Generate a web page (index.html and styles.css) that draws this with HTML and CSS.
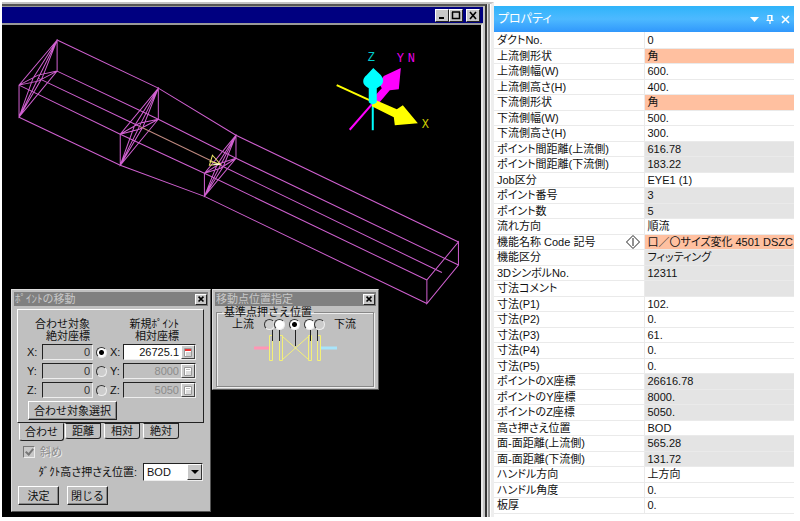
FILE: index.html
```
<!DOCTYPE html>
<html lang="ja">
<head>
<meta charset="utf-8">
<title>プロパティ</title>
<link rel="stylesheet" href="styles.css">
</head>
<body>
<main class="workspace">
  <section class="cad">
    <div class="cad-window">
      <header class="cad-title">
        <button class="win-btn" type="button" aria-label="最小化"><svg viewBox="0 0 12 11"><path d="M3 8h5" stroke="#000" stroke-width="2"/></svg></button>
        <button class="win-btn" type="button" aria-label="最大化"><svg viewBox="0 0 12 11"><path d="M2.500 2v6.500h7V2M2 2h8" fill="none" stroke="#000" stroke-width="1.500"/></svg></button>
        <button class="win-btn win-btn-close" type="button" aria-label="閉じる"><svg viewBox="0 0 12 11"><path d="M3 2l6 7M9 2L3 9" stroke="#000" stroke-width="1.600"/></svg></button>
      </header>
      <div class="viewport">
        <svg class="scene" viewBox="2 25 478 491" preserveAspectRatio="xMinYMin meet">
          <g class="duct">
            <path d="M57 40L158 88L235.500 135L457.500 241.500M57 71L158 119L235.500 158L457.500 264.500M19 85L120 134L204 173L426 279.500M19 117L120 165L204 196L426 303"/>
            <path d="M57 40V71L19 117V85ZM57 40L19 117M57 40L42 78L19 117L33 78ZM19 85L38 75L57 71L38 81Z"/>
            <path d="M158 88V119L120 165V134ZM158 88L120 165M158 88L143 126L120 165L134 126ZM120 134L139 123L158 119L139 129Z"/>
            <path d="M235.500 135V158L204 196V173ZM235.500 135L204 196M235.500 135L223 166L204 196L216 166ZM204 173L220 163L235.500 158L220 168Z"/>
            <path d="M457.500 241.500V264.500L426 303V279.500Z"/>
            <path d="M38 78L139 126M220 165L441 272"/>
          </g>
          <path d="M139 126L220 165" stroke="#c08a80"/>
          <path d="M212 155L220 164L209 165ZM209 161L220 164" fill="none" stroke="#f0e868"/>
          <path d="M213 164H219" stroke="#fff"/>
          <g fill="none" stroke-width="2">
            <path d="M349 129.500L373 102" stroke="#f0f"/>
            <path d="M372 102V130" stroke="#0ff"/>
            <path d="M336 85L373 102" stroke="#ff0"/>
          </g>
          <path d="M371 99L381 88L378 83L383 76L400 68L398 89L389 90L378 103Z" fill="#f0f"/>
          <path d="M373 99L396 109L402 105L417 123L394 125L393 117L371 106Z" fill="#ff0"/>
          <path d="M372.500 68L380 75C384 80 383 85 376 88V102Q372 106 368 102V88C361 85 361 79 366 75Z" fill="#0ff"/>
          <g class="axis-names">
            <text x="367" y="61" fill="#0cc">Z</text>
            <text x="396" y="62" fill="#e0e">Y</text>
            <text x="407" y="62" fill="#e0e">N</text>
            <text x="421" y="128" fill="#cc0">X</text>
          </g>
        </svg>

        <form class="dialog dialog-move">
          <header class="dialog-title"><h2>ﾎﾟｲﾝﾄの移動</h2><button class="win-btn" type="button" aria-label="閉じる"><svg viewBox="0 0 12 11"><path d="M3 2l6 6M9 2L3 8" stroke="#000" stroke-width="2"/></svg></button></header>
          <div class="tab-page">
            <div class="coord-heads"><span>合わせ対象<br>絶対座標</span><span>新規ﾎﾟｲﾝﾄ<br>相対座標</span></div>
            <div class="coords">
              <label for="ax">X:</label><input id="ax" class="field off dark" value="0" readonly><input type="radio" name="axis" aria-label="X" checked><label for="nx">X:</label><span class="field"><input id="nx" value="26725.1"><button class="calc" type="button" aria-label="X 電卓"><svg viewBox="0 0 12 12"><path d="M2.500 2.500h7v8h-7z" fill="#fff" stroke="#999"/><path d="M3 4h6" stroke="#e33" stroke-width="2"/><path d="M4 7h5M4 9h5" stroke="#aaa"/></svg></button></span>
              <label for="ay">Y:</label><input id="ay" class="field off dark" value="0" readonly><input type="radio" name="axis" aria-label="Y"><label for="ny">Y:</label><span class="field off"><input id="ny" value="8000" disabled><button class="calc" type="button" aria-label="Y 電卓" disabled><svg viewBox="0 0 12 12"><path d="M2.500 2.500h7v8h-7z" fill="#fff" stroke="#999"/><path d="M4 4.500h4M4 7h5M4 9h5" stroke="#bbb"/></svg></button></span>
              <label for="az">Z:</label><input id="az" class="field off dark" value="0" readonly><input type="radio" name="axis" aria-label="Z"><label for="nz">Z:</label><span class="field off"><input id="nz" value="5050" disabled><button class="calc" type="button" aria-label="Z 電卓" disabled><svg viewBox="0 0 12 12"><path d="M2.500 2.500h7v8h-7z" fill="#fff" stroke="#999"/><path d="M4 4.500h4M4 7h5M4 9h5" stroke="#bbb"/></svg></button></span>
            </div>
            <button class="push" type="button">合わせ対象選択</button>
          </div>
          <nav class="tabs"><button class="tab current" type="button">合わせ</button><button class="tab" type="button">距離</button><button class="tab" type="button">相対</button><button class="tab" type="button">絶対</button></nav>
          <label class="check-row"><input type="checkbox" checked disabled>斜め</label>
          <div class="combo-row"><label for="hold">ﾀﾞｸﾄ高さ押さえ位置:</label><span class="combo"><select id="hold"><option>BOD</option></select><i class="combo-arrow"></i></span></div>
          <div class="actions"><button class="push" type="button">決定</button><button class="push" type="button">閉じる</button></div>
        </form>

        <form class="dialog dialog-point">
          <header class="dialog-title"><h2>移動点位置指定</h2><button class="win-btn" type="button" aria-label="閉じる"><svg viewBox="0 0 12 11"><path d="M3 2l6 6M9 2L3 8" stroke="#000" stroke-width="2"/></svg></button></header>
          <fieldset>
            <legend>基準点押さえ位置</legend>
            <div class="flow-row">
              <span>上流</span>
              <span class="stops"><input type="radio" name="stop" aria-label="位置1"><input class="filled" type="radio" name="stop" aria-label="位置2"><input class="middle" type="radio" name="stop" aria-label="位置3" checked><input class="filled" type="radio" name="stop" aria-label="位置4"><input type="radio" name="stop" aria-label="位置5"></span>
              <span>下流</span>
            </div>
            <svg class="flow-pic" viewBox="0 0 84 32">
              <path d="M0 18H16" stroke="#ff96b4" stroke-width="3"/>
              <path d="M67 18H83" stroke="#a8e4fa" stroke-width="3"/>
              <path d="M15.500 5.500h3v25h-3zM25.500 5.500h3v25h-3zM54.500 5.500h3v25h-3zM63.500 5.500h3v25h-3zM28 6L55 30M55 6L28 30" fill="none" stroke="#f4f078"/>
              <path d="M18.500 0V11M25.500 0V11M41.500 0V16M56.500 0V11M63.500 0V11" stroke="#222"/>
            </svg>
          </fieldset>
        </form>
      </div>
    </div>
  </section>

  <aside class="properties">
    <header class="prop-title">
      <h1>プロパティ</h1>
      <button type="button" aria-label="メニュー"><svg viewBox="0 0 10 10"><path d="M0 3H9L4.500 8Z" fill="#fff"/></svg></button>
      <button type="button" aria-label="固定"><svg viewBox="0 0 10 10"><path d="M3 6V1.500H7V6M6.500 1.500V6M1.500 6.500H8.500M5 6.500V10" fill="none" stroke="#fff" stroke-width="1.200"/></svg></button>
      <button type="button" aria-label="閉じる"><svg viewBox="0 0 10 10"><path d="M2 2L9 9M9 2L2 9" stroke="#fff" stroke-width="1.600"/></svg></button>
    </header>
    <table>
      <tbody>
        <tr><th>ダクトNo.</th><td>0</td></tr>
        <tr><th>上流側形状</th><td class="shape">角</td></tr>
        <tr><th>上流側幅(W)</th><td>600.</td></tr>
        <tr><th>上流側高さ(H)</th><td>400.</td></tr>
        <tr><th>下流側形状</th><td class="shape">角</td></tr>
        <tr><th>下流側幅(W)</th><td>500.</td></tr>
        <tr><th>下流側高さ(H)</th><td>300.</td></tr>
        <tr><th>ポイント間距離(上流側)</th><td class="fixed">616.78</td></tr>
        <tr><th>ポイント間距離(下流側)</th><td class="fixed">183.22</td></tr>
        <tr><th>Job区分</th><td>EYE1 (1)</td></tr>
        <tr><th>ポイント番号</th><td class="fixed">3</td></tr>
        <tr><th>ポイント数</th><td class="fixed">5</td></tr>
        <tr><th>流れ方向</th><td>順流</td></tr>
        <tr><th>機能名称 Code 記号<svg class="mark" viewBox="0 0 16 14"><path d="M8 .5L14.500 7L8 13.500L1.500 7ZM8 3V11" fill="#fff" stroke="#222"/></svg></th><td class="shape">口／〇サイズ変化 4501 DSZC</td></tr>
        <tr><th>機能区分</th><td class="fixed">フィッティング</td></tr>
        <tr><th>3DシンボルNo.</th><td class="fixed">12311</td></tr>
        <tr><th>寸法コメント</th><td class="fixed"></td></tr>
        <tr><th>寸法(P1)</th><td>102.</td></tr>
        <tr><th>寸法(P2)</th><td>0.</td></tr>
        <tr><th>寸法(P3)</th><td>61.</td></tr>
        <tr><th>寸法(P4)</th><td>0.</td></tr>
        <tr><th>寸法(P5)</th><td>0.</td></tr>
        <tr><th>ポイントのX座標</th><td class="fixed">26616.78</td></tr>
        <tr><th>ポイントのY座標</th><td class="fixed">8000.</td></tr>
        <tr><th>ポイントのZ座標</th><td class="fixed">5050.</td></tr>
        <tr><th>高さ押さえ位置</th><td>BOD</td></tr>
        <tr><th>面-面距離(上流側)</th><td class="fixed">565.28</td></tr>
        <tr><th>面-面距離(下流側)</th><td class="fixed">131.72</td></tr>
        <tr><th>ハンドル方向</th><td>上方向</td></tr>
        <tr><th>ハンドル角度</th><td>0.</td></tr>
        <tr><th>板厚</th><td>0.</td></tr>
      </tbody>
    </table>
  </aside>
</main>
</body>
</html>
```

FILE: styles.css
```
* { box-sizing: border-box; }
body {
  margin: 0;
  background: #fff;
  color: #111;
  font: 11px/12px "Liberation Sans", "Noto Sans CJK JP", sans-serif;
}
h1, h2 { margin: 0; font-size: 11px; font-weight: 400; }
button, input, select { font: inherit; color: inherit; margin: 0; padding: 0; border: 0; border-radius: 0; }
svg { display: block; }

.workspace {
  display: grid;
  grid-template-columns: minmax(0, 1fr) 300px;
  min-height: 100vh;
  padding: 2px 6px 4px 2px;
}

/* drawing window */
.cad {
  display: flex;
  border-top: 2px solid #c4c4c4;
  border-right: 3px solid #eee;
}
.cad-window {
  flex: 1;
  display: flex;
  flex-direction: column;
  border-top: 2px solid #555;
  border-right: 2px solid #333;
  box-shadow: 1px 0 #ddd, 3px 0 #999;
  margin-right: 4px;
  background: #c4c4c4;
}
.cad-title {
  display: flex;
  justify-content: flex-end;
  align-items: center;
  height: 17px;
  margin-right: 2px;
  padding-right: 3px;
  border-top: 1px solid #999;
  background: #000080;
}
.win-btn {
  width: 14px;
  height: 13px;
  background: #c8c8c8;
  border: 1px solid;
  border-color: #fff #222 #222 #fff;
}
.win-btn svg { width: 12px; height: 11px; }
.win-btn-close { margin-left: 3px; }
.viewport {
  position: relative;
  flex: 1;
  margin-right: 2px;
  border-top: 2px solid #999;
  border-right: 2px solid #e8e8e8;
  background: #000;
  overflow: hidden;
}
.scene { width: 100%; }
.duct { fill: none; stroke: #d060d0; stroke-width: 1; }
.axis-names { font: 12px "Liberation Mono", monospace; }

/* floating dialogs */
.dialog {
  position: absolute;
  top: 264px;
  padding: 2px;
  background: #c0c0c0;
  border: 1px solid;
  border-color: #ddd #555 #555 #ddd;
}
.dialog-move { left: 9px; width: 200px; padding-bottom: 6px; }
.dialog-point { left: 210px; width: 167px; }
.dialog-title {
  display: flex;
  justify-content: space-between;
  align-items: center;
  height: 14px;
  padding: 0 1px;
  background: #808080;
  color: #c8c8c8;
}
.dialog-title .win-btn { width: 12px; height: 11px; }
.dialog-title .win-btn svg { width: 10px; height: 9px; }

.tab-page {
  margin: 3px 4px 0 3px;
  padding: 8px 7px 2px 8px;
  border: 1px solid;
  border-color: #fff #222 #222 #fff;
}
.coord-heads { display: flex; justify-content: space-between; padding: 0 17px 2px 9px; text-align: right; }
.coords {
  display: grid;
  grid-template-columns: 16px 51px 16px 14px 1fr;
  row-gap: 3px;
  align-items: center;
}
.coords label { padding-left: 1px; }
.field {
  display: flex;
  width: 100%;
  height: 16px;
  border: 1px solid;
  border-color: #222 #eee #eee #222;
  background: #fff;
  text-align: right;
}
.field input { flex: 1; width: 0; min-width: 0; background: none; text-align: right; padding-right: 2px; }
.off { background: #c0c0c0; color: #8c8c8c; }
.dark { color: #333; padding-right: 2px; }
.calc { width: 14px; background: #ccc; border: 1px solid; border-color: #fff #444 #444 #fff; }
.calc svg { width: 12px; height: 12px; }

input[type="radio"] {
  appearance: none;
  width: 11px;
  height: 11px;
  border: 1px solid;
  border-color: #333 #eee #eee #333;
  border-radius: 50%;
  background: #ccc;
}
.coords input[type="radio"] { justify-self: center; }
input[type="radio"]:checked { background: radial-gradient(circle, #000 2px, #fff 3px); }
input.filled { background: #fff; }

.push {
  height: 19px;
  padding: 0 5px;
  background: #c0c0c0;
  border: 1px solid;
  border-color: #fff #222 #222 #fff;
  box-shadow: inset -1px -1px #888;
  white-space: nowrap;
}
.tab-page .push { margin: 3px 0 0 2px; }
.tabs { display: flex; gap: 3px; align-items: flex-start; padding-left: 5px; }
.tab {
  width: 36px;
  height: 16px;
  background: #c0c0c0;
  border: 1px solid;
  border-color: #222 #222 #222 #fff;
  border-radius: 0 0 3px 3px;
}
.tab.current { width: 45px; height: 18px; border-top-color: #c0c0c0; margin: 0 -2px 0 0; }
.check-row { display: flex; align-items: center; gap: 5px; margin: 5px 0 0 9px; color: #8c8c8c; text-shadow: 1px 1px #eee; }
.check-row input {
  appearance: none;
  width: 12px;
  height: 12px;
  border: 1px solid;
  border-color: #777 #eee #eee #777;
  background: #c8c8c8;
}
.check-row input::after {
  content: "";
  display: block;
  width: 3px;
  height: 6px;
  margin: 0 0 0 3px;
  border: solid #777;
  border-width: 0 2px 2px 0;
  transform: rotate(40deg);
}
.combo-row { display: flex; align-items: center; justify-content: flex-end; gap: 6px; margin: 5px 5px 0 0; }
.combo-row label { font-feature-settings: "palt"; }
.combo {
  display: flex;
  width: 60px;
  height: 18px;
  border: 1px solid;
  border-color: #222 #eee #eee #222;
  background: #fff;
}
.combo select { appearance: none; flex: 1; width: 0; padding-left: 3px; background: none; }
.combo-arrow {
  display: grid;
  place-items: center;
  width: 15px;
  background: #c8c8c8;
  border: 1px solid;
  border-color: #fff #333 #333 #fff;
}
.combo-arrow::after { content: ""; border: 4px solid transparent; border-top-color: #000; border-bottom: 0; }
.actions { display: flex; gap: 8px; margin: 5px 0 0 4px; }
.actions .push { width: 41px; padding: 0; }

fieldset { margin: 0 2px 0 1px; padding: 0 0 24px; min-width: 0; border: 1px solid #888; box-shadow: inset 1px 1px #eee, 1px 1px #eee; }
legend { margin-left: 5px; padding: 0 2px; }
.flow-row { display: flex; justify-content: space-between; align-items: center; padding: 0 17px 0 15px; }
.stops { display: flex; }
.stops input { margin-right: -1px; }
.stops .middle { margin: 0 4px 0 5px; }
.flow-pic { width: 84px; height: 32px; margin-left: 37px; }

/* property sheet */
.prop-title {
  display: flex;
  align-items: center;
  gap: 5px;
  height: 26px;
  margin-top: 4px;
  padding: 0 4px;
  background: linear-gradient(#2fb4fa, #4db9ff 50%, #3098fc);
  color: #fff;
}
.prop-title h1 { flex: 1; font-size: 12px; font-feature-settings: "palt"; }
.prop-title button { width: 10px; height: 10px; background: none; }
.prop-title svg { width: 10px; height: 10px; }
.properties { font-feature-settings: "palt"; }
table { width: 100%; table-layout: fixed; border-collapse: collapse; }
tr { height: 15px; }
tr:nth-child(odd) { height: 16px; }
th, td {
  padding: 0 3px;
  border-bottom: 1px solid #eaeaea;
  text-align: left;
  font-weight: 400;
  white-space: nowrap;
  line-height: 14px;
}
th { border-right: 1px solid #eaeaea; }
.fixed { background: #e4e4e4; }
.shape { background: #ffc0a0; }
.mark { float: right; width: 16px; height: 14px; }
```
